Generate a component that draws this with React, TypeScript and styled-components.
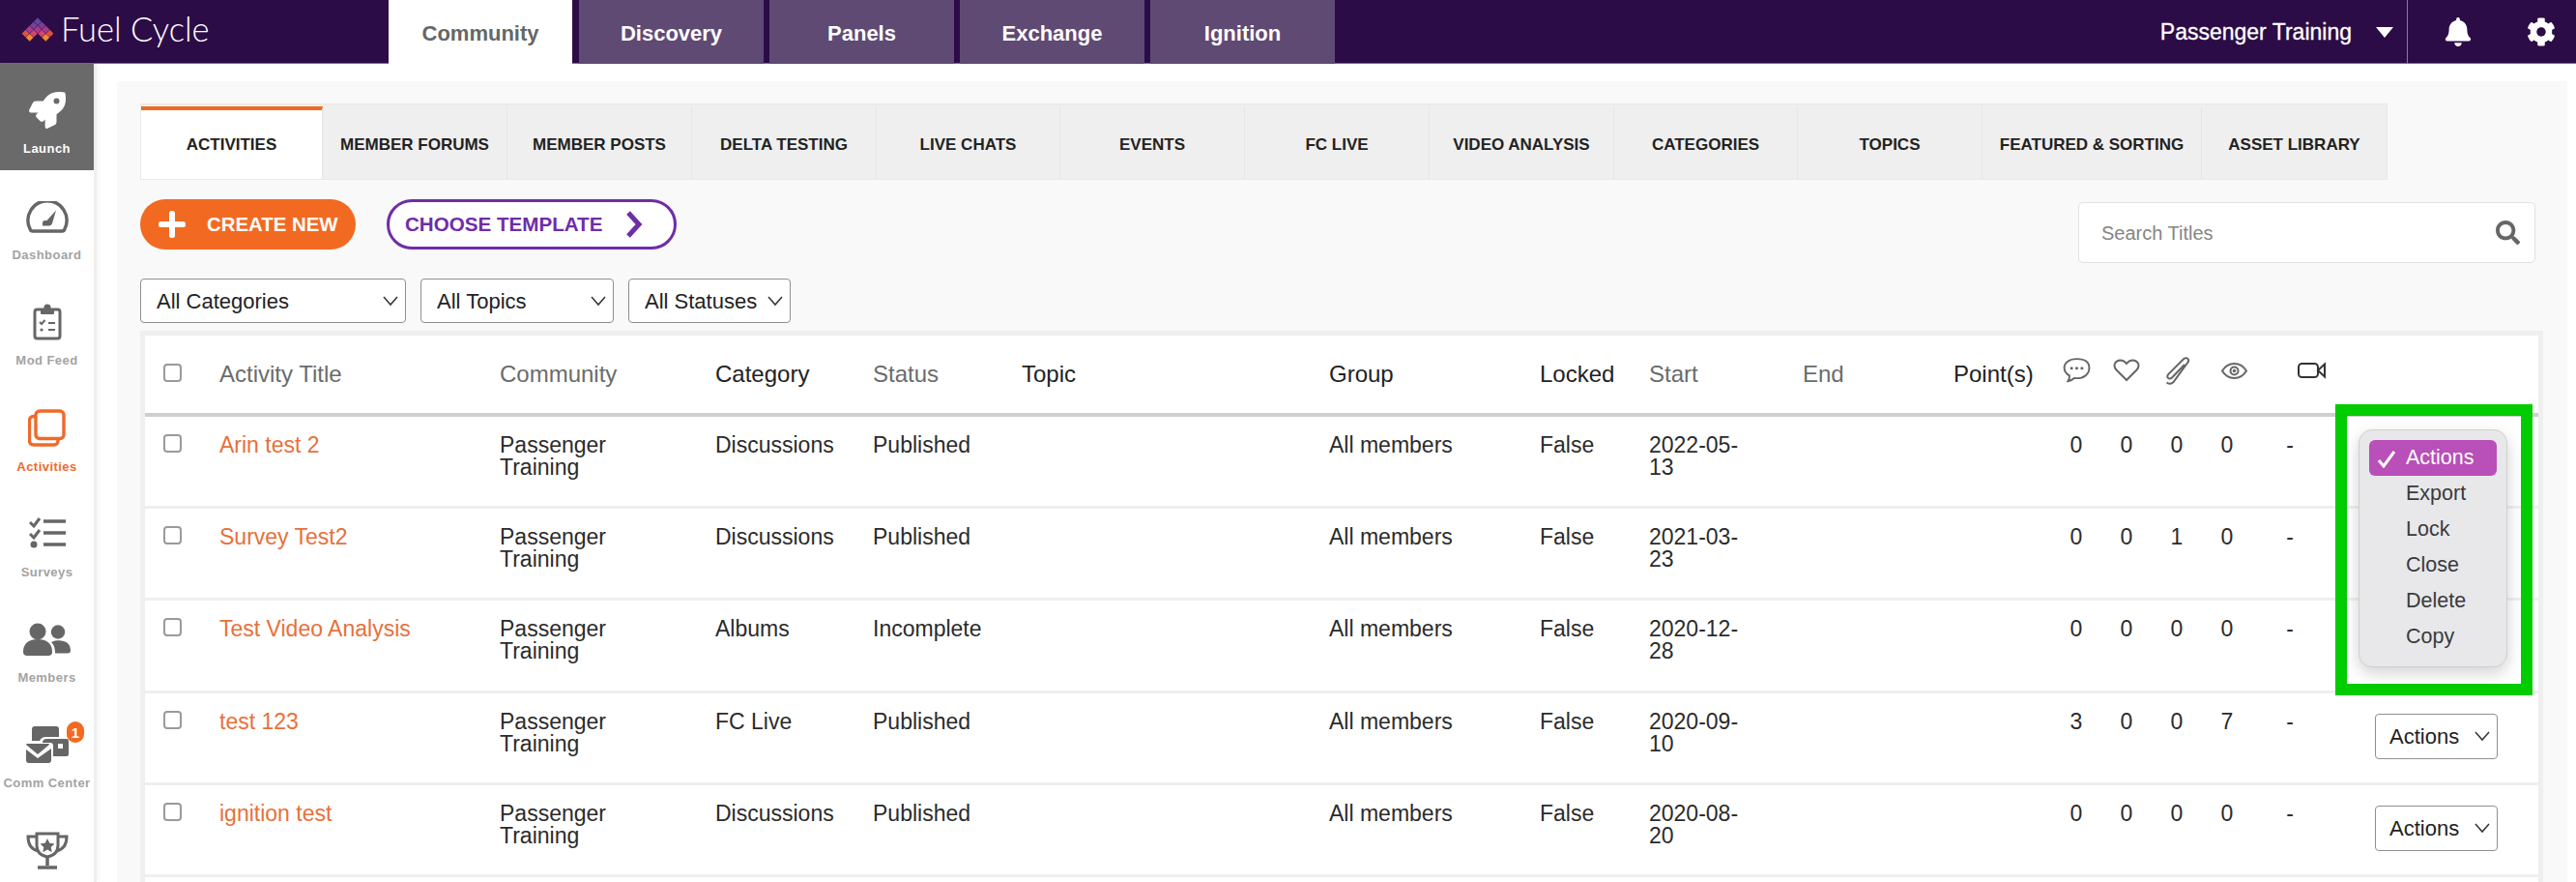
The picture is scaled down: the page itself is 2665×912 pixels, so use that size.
import styled, { createGlobalStyle } from 'styled-components';
import { FaBell, FaCog, FaRocket, FaSearch } from 'react-icons/fa';

const GlobalStyle = createGlobalStyle`
  html, body {
    margin: 0;
    padding: 0;
    background: #fff;
    font-family: "Liberation Sans", Arial, sans-serif;
  }
  * {
    box-sizing: border-box;
  }
`;

const Page = styled.div`
  width: 2665px;
  height: 912px;
  overflow: hidden;
  display: flex;
  flex-direction: column;
`;

/* top bar */
const TopBar = styled.header`
  height: 66px;
  flex: none;
  display: flex;
  background: #2c0c46;
  border-bottom: 1px solid #7d6590;
`;

const LogoLink = styled.a`
  width: 402px;
  flex: none;
  display: flex;
  align-items: center;
  padding-left: 22px;
  gap: 7px;
`;

const LogoText = styled.span`
  color: #fff;
  font-family: Lato, "Open Sans", sans-serif;
  font-weight: 300;
  font-size: 34.5px;
  line-height: 1;
  margin-top: -5px;
`;

const ProductTabs = styled.nav`
  display: flex;
  gap: 6px;
`;

const ProductTab = styled.a<{ $active?: boolean }>`
  width: ${(p) => (p.$active ? '190px' : '191px')};
  margin-right: ${(p) => (p.$active ? '1px' : '0')};
  height: 66px;
  display: flex;
  align-items: center;
  justify-content: center;
  padding-top: 4px;
  font-size: 22px;
  font-weight: 700;
  background: ${(p) => (p.$active ? '#fff' : '#5f4a74')};
  color: ${(p) => (p.$active ? '#666' : '#fff')};
`;

const AccountArea = styled.div`
  margin-left: auto;
  display: flex;
  align-items: stretch;
  color: #fff;
`;

const AccountSwitch = styled.div`
  display: flex;
  align-items: center;
  gap: 25px;
  padding-right: 14px;
  font-size: 23px;
  -webkit-text-stroke: 0.3px #fff;
  border-right: 1px solid #8a7a98;
  margin-bottom: -1px;
`;

const Caret = styled.span`
  width: 0;
  height: 0;
  border-left: 9px solid transparent;
  border-right: 9px solid transparent;
  border-top: 11px solid #fff;
`;

const TopIcons = styled.div`
  display: flex;
  align-items: center;
  width: 174px;
  padding-left: 37px;
  gap: 56px;
  font-size: 30px;
`;

/* body */
const Body = styled.div`
  flex: 1;
  display: flex;
  min-height: 0;
`;

const Sidebar = styled.aside`
  width: 100px;
  flex: none;
  border-right: 3px solid #eee;
  box-shadow: 2px 0 6px rgba(0, 0, 0, 0.04);
`;

const SideItem = styled.a<{ $state?: 'launch' | 'active' }>`
  position: relative;
  height: ${(p) => (p.$state === 'launch' ? '110px' : '109.3px')};
  padding-top: 27px;
  display: flex;
  flex-direction: column;
  align-items: center;
  background: ${(p) => (p.$state === 'launch' ? '#6a6a6a' : 'transparent')};
  color: ${(p) => (p.$state === 'launch' ? '#fff' : p.$state === 'active' ? '#ee6a2a' : '#666')};
`;

const SideIcon = styled.span`
  height: 42px;
  display: flex;
  align-items: center;
  justify-content: center;
`;

const SideLabel = styled.span<{ $state?: 'launch' | 'active' }>`
  margin-top: 9px;
  line-height: 20px;
  font-size: 13px;
  font-weight: 700;
  letter-spacing: 0.45px;
  white-space: nowrap;
  color: ${(p) => (p.$state === 'launch' ? '#fff' : p.$state === 'active' ? '#ee6a2a' : '#a3a3a3')};
`;

const Badge = styled.span`
  position: absolute;
  left: 69px;
  top: 24px;
  width: 18px;
  height: 22px;
  border-radius: 9px;
  background: #f26a21;
  color: #fff;
  font-size: 15px;
  font-weight: 700;
  display: flex;
  align-items: center;
  justify-content: center;
`;

const Main = styled.main`
  flex: 1;
  min-width: 0;
  padding: 18px 9px 0 21px;
`;

const Panel = styled.div`
  height: 100%;
  background: #f9f9f9;
  padding: 23px 25px 0 24px;
  display: flex;
  flex-direction: column;
`;

const SectionTabs = styled.div`
  display: flex;
  align-self: flex-start;
  height: 79px;
  background: #efefef;
  border: 1px solid #e9e9e9;
`;

const SectionTab = styled.a<{ $active?: boolean; $width: number }>`
  width: ${(p) => p.$width}px;
  display: flex;
  align-items: center;
  justify-content: center;
  font-size: 17px;
  font-weight: 700;
  color: #222;
  white-space: nowrap;
  border-right: 1px solid #e6e6e6;
  background: ${(p) => (p.$active ? '#fff' : 'transparent')};
  border-top: 4px solid ${(p) => (p.$active ? '#f26a21' : 'transparent')};
  margin-top: ${(p) => (p.$active ? '2px' : '0')};
  padding-top: ${(p) => (p.$active ? '1px' : '3px')};
  &:last-child {
    border-right: none;
  }
`;

const Tools = styled.div`
  display: flex;
  justify-content: space-between;
  align-items: flex-start;
  margin-top: 20px;
`;

const ToolsLeft = styled.div`
  display: flex;
  flex-direction: column;
  gap: 30px;
`;

const ButtonRow = styled.div`
  display: flex;
  gap: 32px;
`;

const CreateButton = styled.button`
  width: 223px;
  height: 52px;
  border: none;
  border-radius: 26px;
  background: #f26a21;
  color: #fff;
  font: 700 20.4px "Liberation Sans", Arial, sans-serif;
  display: flex;
  align-items: center;
  padding: 0 0 0 18px;
  gap: 21px;
`;

const TemplateButton = styled.button`
  width: 300px;
  height: 52px;
  border: 3px solid #6f2da8;
  border-radius: 26px;
  background: #fff;
  color: #6f2da8;
  font: 700 20.6px "Liberation Sans", Arial, sans-serif;
  display: flex;
  align-items: center;
  padding: 0 0 0 16px;
  gap: 24px;
`;

const FilterRow = styled.div`
  display: flex;
  gap: 15px;
`;

const SelectWrap = styled.div<{ $width: number; $height: number }>`
  position: relative;
  width: ${(p) => p.$width}px;
  height: ${(p) => p.$height}px;
`;

const Select = styled.select<{ $pad: number }>`
  appearance: none;
  width: 100%;
  height: 100%;
  border: 1px solid #8f8f8f;
  border-radius: 4px;
  background: #fff;
  color: #222;
  font: 400 22px "Liberation Sans", Arial, sans-serif;
  padding: 0 0 0 ${(p) => p.$pad}px;
`;

const Chevron = styled.svg`
  position: absolute;
  right: 8px;
  top: 50%;
  margin-top: -6px;
  pointer-events: none;
`;

const SearchBox = styled.div`
  position: relative;
  width: 473px;
  height: 63px;
  margin: 3px 8px 0 0;
`;

const SearchInput = styled.input`
  width: 100%;
  height: 100%;
  border: 1px solid #e1e1e1;
  border-radius: 5px;
  background: #fff;
  padding: 2px 60px 0 23px;
  font: 400 20px "Liberation Sans", Arial, sans-serif;
  &::placeholder {
    color: #858585;
    opacity: 1;
  }
`;

const SearchIcon = styled.span`
  position: absolute;
  right: 16px;
  top: 19px;
  font-size: 25px;
  line-height: 1;
  color: #666;
`;

/* table */
const Table = styled.div`
  position: relative;
  flex: 1;
  margin-top: 8px;
  background: #fff;
  border: 5px solid #efefef;
  border-bottom: none;
`;

const columns =
  '58px 290px 223px 163px 154px 318px 218px 113px 159px 156px 101px 52px 52px 52px 52px 78px 1fr';

const HeadRow = styled.div`
  display: grid;
  grid-template-columns: ${columns};
  align-items: center;
  height: 84px;
  padding: 0 0 0 19px;
  border-bottom: 4px solid #cfcfcf;
`;

const HeadCell = styled.div<{ $dim?: boolean }>`
  font-size: 24px;
  color: ${(p) => (p.$dim ? '#6b6b6b' : '#222')};
`;

const HeadIcon = styled.div<{ $offset?: number }>`
  display: flex;
  justify-content: center;
  color: #666;
  margin-top: -8px;
  padding-left: ${(p) => p.$offset ?? 0}px;
`;

const HeadCheck = styled.div`
  margin-top: -4px;
`;

const BodyRow = styled.div`
  display: grid;
  grid-template-columns: ${columns};
  align-items: start;
  height: 95.2px;
  padding: 18px 0 0 19px;
  border-bottom: 3px solid #efefef;
  font-size: 23px;
  line-height: 23px;
  color: #2b2b2b;
`;

const Check = styled.input.attrs({ type: 'checkbox' })`
  appearance: none;
  display: block;
  margin: 0;
  width: 19px;
  height: 19px;
  background: #fff;
  border: 2px solid #9a9a9a;
  border-radius: 4px;
`;

const TitleLink = styled.a`
  color: #e8703a;
`;

const Wrapped = styled.div`
  max-width: 170px;
`;

const CountCell = styled.div`
  text-align: center;
`;

const ActionCell = styled.div`
  padding: 3px 0 0 49px;
`;

const Marker = styled.div`
  position: absolute;
  left: 2266px;
  top: 71px;
  width: 204px;
  height: 301px;
  border: 12px solid #00cc00;
  z-index: 2;
`;

const Menu = styled.ul`
  position: absolute;
  left: 2290px;
  top: 97px;
  width: 154px;
  height: 246px;
  margin: 0;
  padding: 10px;
  list-style: none;
  background: #e8e8ea;
  border: 1px solid #cfcfcf;
  border-radius: 14px;
  box-shadow: 0 6px 16px rgba(0, 0, 0, 0.18);
  z-index: 3;
`;

const MenuItem = styled.li<{ $selected?: boolean }>`
  position: relative;
  height: 37px;
  display: flex;
  align-items: center;
  padding-left: 38px;
  font-size: 21.5px;
  color: ${(p) => (p.$selected ? '#fff' : '#3a3a3c')};
  background: ${(p) => (p.$selected ? '#b94fb8' : 'transparent')};
  border-radius: 6px;
`;

const MenuCheck = styled.svg`
  position: absolute;
  left: 8px;
  top: 11px;
`;

/* icons */
const logoCells: [number, number, string][] = [
  [0, 1, '#5b4a9e'],
  [-1, 2, '#7c3f95'], [1, 2, '#7c3f95'],
  [-2, 3, '#a83a92'], [0, 3, '#a83a92'], [2, 3, '#a83a92'],
  [-3, 4, '#e0503f'], [-1, 4, '#d8456a'], [1, 4, '#d8456a'], [3, 4, '#e0503f'],
  [-2, 5, '#f58a2b'], [2, 5, '#f58a2b']
];

const Logo = () => (
  <svg width="34" height="26" viewBox="-17 0 34 26" style={{ flex: 'none', marginTop: -3 }}>
    {logoCells.map(([x, y, c]) => {
      const cx = x * 4.17;
      const cy = y * 4.17;
      return (
        <polygon
          key={`${x}-${y}`}
          fill={c}
          points={`${cx},${cy - 3.9} ${cx + 3.9},${cy} ${cx},${cy + 3.9} ${cx - 3.9},${cy}`}
        />
      );
    })}
  </svg>
);

const GaugeIcon = () => (
  <svg width="44" height="33" viewBox="0 0 44 33" fill="none">
    <path d="M7 31h30a3 3 0 0 0 3-2.5A20 20 0 1 0 4 28.5 3 3 0 0 0 7 31z" stroke="currentColor" strokeWidth="3.4" />
    <path d="M17 25.5v-3q0-2.5 2.5-2.5h2L31 9.5 27 23q-.8 2.5-3.5 2.5z" fill="currentColor" />
  </svg>
);

const ClipboardIcon = () => (
  <svg width="30" height="38" viewBox="0 0 30 38" fill="none">
    <rect x="2" y="6" width="26" height="30" rx="2.5" stroke="currentColor" strokeWidth="3" />
    <circle cx="15" cy="4" r="3.6" fill="currentColor" />
    <rect x="8" y="5" width="14" height="6" rx="1" fill="currentColor" />
    <path d="M7 19l2 2 3.5-4M16 20h7M16 27h7" stroke="currentColor" strokeWidth="2" />
    <circle cx="9" cy="27" r="1.6" fill="currentColor" />
  </svg>
);

const CopyIcon = () => (
  <svg width="39" height="39" viewBox="0 0 39 39" fill="none" stroke="currentColor" strokeWidth="3.4">
    <path d="M8 7.5H5.5a4 4 0 0 0-4 4V33a4 4 0 0 0 4 4h21.5a4 4 0 0 0 4-4v-2.5" />
    <rect x="8" y="2" width="29" height="28.5" rx="4" />
  </svg>
);

const ListIcon = () => (
  <svg width="38" height="36" viewBox="0 0 38 36" fill="none" stroke="currentColor">
    <path d="M1 6l4 4 6-8M1 18l4 4 6-8" strokeWidth="3" />
    <path d="M15 5h23M15 17h23M15 29h23" strokeWidth="3.6" />
    <circle cx="5" cy="29" r="3.5" fill="currentColor" stroke="none" />
  </svg>
);

const MembersIcon = () => (
  <svg width="49" height="34" viewBox="0 0 49 34" fill="currentColor">
    <circle cx="15" cy="9" r="8.5" />
    <path d="M0 30c0-9 6-13 15-13s15 4 15 13q0 4-4 4H4q-4 0-4-4z" />
    <circle cx="36" cy="9.5" r="7.2" />
    <path d="M33 18.5c9-1.5 16 2 16 10q0 3-3 3H33c0-5-1-9-4-11.5z" />
  </svg>
);

const CommIcon = () => (
  <svg width="44" height="38" viewBox="0 0 44 38" fill="currentColor">
    <path d="M6 3q0-3 3-3h22q3 0 3 3v8H20q-4 0-6 4H6z" />
    <path d="M17 16q1-3 4-3h21q2 0 2 2v14q0 2-2 2H28V20q0-3-3-3h-8z" />
    <rect x="33" y="18" width="5" height="5" fill="#fff" />
    <path d="M0 19q0-1 1-1h22q1 0 1 1L12 29z" />
    <path d="M0 24l12 9 14-10v12q0 3-3 3H3q-3 0-3-3z" />
  </svg>
);

const TrophyIcon = () => (
  <svg width="44" height="39" viewBox="0 0 44 39" fill="none" stroke="currentColor">
    <path d="M11 2h22v12q0 10-11 12Q11 24 11 14z" strokeWidth="3" />
    <path d="M11 5H2q0 13 11 15M33 5h9q0 13-11 15" strokeWidth="3" />
    <path d="M22 26v9M12 37h20" strokeWidth="3.5" />
    <path d="M22 7l2.3 4.8 5.2.6-3.8 3.6 1 5.2-4.7-2.6-4.7 2.6 1-5.2-3.8-3.6 5.2-.6z" fill="currentColor" stroke="none" />
  </svg>
);

const CommentIcon = () => (
  <svg width="29" height="29" viewBox="0 0 27 27" fill="none" stroke="currentColor" strokeWidth="1.8">
    <path d="M13.5 2C6.5 2 1.5 5.5 1.5 10.5c0 3.5 2 6 5 7.5.2 2-.5 4-1.5 5.5 2.5 0 4.500-1.500 6-3 1 .1 1.800.1 2.500.1 7 0 12-4 12-10S20.500 2 13.500 2z" />
    <circle cx="8.5" cy="11" r="1.4" fill="currentColor" stroke="none" />
    <circle cx="13.5" cy="11" r="1.4" fill="currentColor" stroke="none" />
    <circle cx="18.5" cy="11" r="1.4" fill="currentColor" stroke="none" />
  </svg>
);

const HeartIcon = () => (
  <svg width="28" height="24" viewBox="0 0 28 24" fill="none" stroke="currentColor" strokeWidth="2">
    <path d="M14 22L3.5 11.5C-1 6.5 3 1.5 7.5 1.5c3 0 5 1.5 6.500 3.500 1.500-2 3.500-3.500 6.500-3.500C25 1.500 29 6.500 24.500 11.500z" />
  </svg>
);

const ClipIcon = () => (
  <svg width="27" height="29" viewBox="0 0 27 29" fill="none" stroke="currentColor" strokeWidth="2">
    <path d="M21 8L8 21.5c-1.3 1.3-3.2 1.3-4 .4s-.8-2.7.4-4L19.5 2.800c1.800-1.800 4.200-1.800 5-.8s.8 3.200-1 5L9.500 26c-2 2-5 2.300-7 .5" />
  </svg>
);

const EyeIcon = () => (
  <svg width="27" height="17" viewBox="0 0 27 17" fill="none" stroke="currentColor" strokeWidth="2">
    <path d="M1 8.5C4 3.5 8.5 1 13.5 1S23 3.5 26 8.5C23 13.5 18.5 16 13.5 16S4 13.5 1 8.5z" />
    <circle cx="13.5" cy="8.5" r="4" />
    <circle cx="13.5" cy="8.5" r="1.8" fill="currentColor" stroke="none" />
  </svg>
);

const VideoIcon = () => (
  <svg width="29" height="18" viewBox="0 0 29 18" fill="none" stroke="#333" strokeWidth="2">
    <rect x="1" y="2" width="20" height="14" rx="3.5" />
    <path d="M21 9l7-6.5v13z" />
  </svg>
);

const SmallChevron = ({ size }: { size: number }) => (
  <Chevron width={size} height="12" viewBox="0 0 16 10" fill="none" stroke="#333" strokeWidth="1.5">
    <path d="M1 1l7 8 7-8" />
  </Chevron>
);

const sections = [
  { label: 'ACTIVITIES', width: 188 },
  { label: 'MEMBER FORUMS', width: 191 },
  { label: 'MEMBER POSTS', width: 191 },
  { label: 'DELTA TESTING', width: 191 },
  { label: 'LIVE CHATS', width: 190 },
  { label: 'EVENTS', width: 191 },
  { label: 'FC LIVE', width: 191 },
  { label: 'VIDEO ANALYSIS', width: 191 },
  { label: 'CATEGORIES', width: 190 },
  { label: 'TOPICS', width: 191 },
  { label: 'FEATURED & SORTING', width: 227 },
  { label: 'ASSET LIBRARY', width: 191 }
];

const sideItems = [
  { key: 'launch', label: 'Launch', state: 'launch' as const, icon: <FaRocket size={38} /> },
  { key: 'dashboard', label: 'Dashboard', icon: <GaugeIcon /> },
  { key: 'mod', label: 'Mod Feed', icon: <ClipboardIcon /> },
  { key: 'activities', label: 'Activities', state: 'active' as const, icon: <CopyIcon /> },
  { key: 'surveys', label: 'Surveys', icon: <ListIcon /> },
  { key: 'members', label: 'Members', icon: <MembersIcon /> },
  { key: 'comm', label: 'Comm Center', icon: <CommIcon />, badge: '1' },
  { key: 'trophy', icon: <TrophyIcon /> }
];

const rows = [
  { title: 'Arin test 2', category: 'Discussions', status: 'Published', date: ['2022-05-', '13'], counts: [0, 0, 0, 0] },
  { title: 'Survey Test2', category: 'Discussions', status: 'Published', date: ['2021-03-', '23'], counts: [0, 0, 1, 0] },
  { title: 'Test Video Analysis', category: 'Albums', status: 'Incomplete', date: ['2020-12-', '28'], counts: [0, 0, 0, 0] },
  { title: 'test 123', category: 'FC Live', status: 'Published', date: ['2020-09-', '10'], counts: [3, 0, 0, 7], actions: true },
  { title: 'ignition test', category: 'Discussions', status: 'Published', date: ['2020-08-', '20'], counts: [0, 0, 0, 0], actions: true }
];

const App = () => (
  <Page>
    <GlobalStyle />
    <TopBar>
      <LogoLink>
        <Logo />
        <LogoText>Fuel Cycle</LogoText>
      </LogoLink>
      <ProductTabs>
        <ProductTab $active>Community</ProductTab>
        <ProductTab>Discovery</ProductTab>
        <ProductTab>Panels</ProductTab>
        <ProductTab>Exchange</ProductTab>
        <ProductTab>Ignition</ProductTab>
      </ProductTabs>
      <AccountArea>
        <AccountSwitch>
          Passenger Training
          <Caret />
        </AccountSwitch>
        <TopIcons>
          <FaBell />
          <FaCog />
        </TopIcons>
      </AccountArea>
    </TopBar>
    <Body>
      <Sidebar>
        {sideItems.map((item) => (
          <SideItem key={item.key} $state={item.state}>
            <SideIcon>{item.icon}</SideIcon>
            {item.label && <SideLabel $state={item.state}>{item.label}</SideLabel>}
            {item.badge && <Badge>{item.badge}</Badge>}
          </SideItem>
        ))}
      </Sidebar>
      <Main>
        <Panel>
          <SectionTabs>
            {sections.map((s, i) => (
              <SectionTab key={s.label} $active={i === 0} $width={s.width}>
                {s.label}
              </SectionTab>
            ))}
          </SectionTabs>
          <Tools>
            <ToolsLeft>
              <ButtonRow>
                <CreateButton>
                  <svg width="30" height="30" viewBox="0 0 30 30" fill="#fff">
                    <rect x="12" y="1" width="6" height="28" rx="2.5" />
                    <rect x="1" y="12" width="28" height="6" rx="2.5" />
                  </svg>
                  CREATE NEW
                </CreateButton>
                <TemplateButton>
                  CHOOSE TEMPLATE
                  <svg width="18" height="28" viewBox="0 0 18 28" fill="none" stroke="#6f2da8" strokeWidth="5">
                    <path d="M3 2l11 12L3 26" />
                  </svg>
                </TemplateButton>
              </ButtonRow>
              <FilterRow>
                {[
                  { label: 'All Categories', width: 275 },
                  { label: 'All Topics', width: 200 },
                  { label: 'All Statuses', width: 168 }
                ].map((f) => (
                  <SelectWrap key={f.label} $width={f.width} $height={46}>
                    <Select $pad={16}>
                      <option>{f.label}</option>
                    </Select>
                    <SmallChevron size={16} />
                  </SelectWrap>
                ))}
              </FilterRow>
            </ToolsLeft>
            <SearchBox>
              <SearchInput placeholder="Search Titles" />
              <SearchIcon>
                <FaSearch />
              </SearchIcon>
            </SearchBox>
          </Tools>
          <Table>
            <HeadRow>
              <HeadCheck>
                <Check />
              </HeadCheck>
              <HeadCell $dim>Activity Title</HeadCell>
              <HeadCell $dim>Community</HeadCell>
              <HeadCell>Category</HeadCell>
              <HeadCell $dim>Status</HeadCell>
              <HeadCell>Topic</HeadCell>
              <HeadCell>Group</HeadCell>
              <HeadCell>Locked</HeadCell>
              <HeadCell $dim>Start</HeadCell>
              <HeadCell $dim>End</HeadCell>
              <HeadCell>Point(s)</HeadCell>
              <HeadIcon><CommentIcon /></HeadIcon>
              <HeadIcon><HeartIcon /></HeadIcon>
              <HeadIcon><ClipIcon /></HeadIcon>
              <HeadIcon $offset={15}><EyeIcon /></HeadIcon>
              <HeadIcon $offset={44}><VideoIcon /></HeadIcon>
            </HeadRow>
            {rows.map((r) => (
              <BodyRow key={r.title}>
                <Check />
                <TitleLink>{r.title}</TitleLink>
                <Wrapped>Passenger Training</Wrapped>
                <div>{r.category}</div>
                <div>{r.status}</div>
                <div />
                <div>All members</div>
                <div>False</div>
                <div>
                  {r.date[0]}
                  <br />
                  {r.date[1]}
                </div>
                <div />
                <div />
                {r.counts.map((c, i) => (
                  <CountCell key={i}>{c}</CountCell>
                ))}
                <CountCell>-</CountCell>
                <ActionCell>
                  {r.actions && (
                    <SelectWrap $width={127} $height={47}>
                      <Select $pad={14}>
                        <option>Actions</option>
                      </Select>
                      <SmallChevron size={16} />
                    </SelectWrap>
                  )}
                </ActionCell>
              </BodyRow>
            ))}
            <Marker />
            <Menu>
              <MenuItem $selected>
                <MenuCheck width="20" height="18" viewBox="0 0 20 18" fill="none" stroke="#fff" strokeWidth="3">
                  <path d="M2 10l5 6L18 1" />
                </MenuCheck>
                Actions
              </MenuItem>
              <MenuItem>Export</MenuItem>
              <MenuItem>Lock</MenuItem>
              <MenuItem>Close</MenuItem>
              <MenuItem>Delete</MenuItem>
              <MenuItem>Copy</MenuItem>
            </Menu>
          </Table>
        </Panel>
      </Main>
    </Body>
  </Page>
);

export default App;
